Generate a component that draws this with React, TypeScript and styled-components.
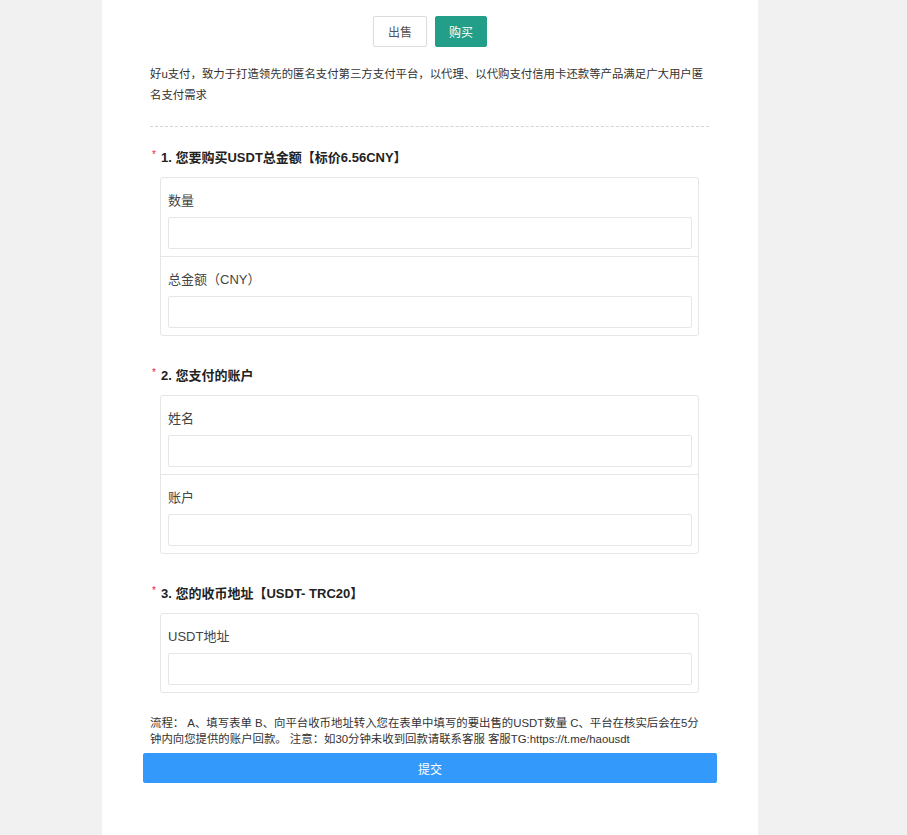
import React from "react";
import styled, { createGlobalStyle } from "styled-components";

const Global = createGlobalStyle`
  html, body { margin: 0; padding: 0; background: #f1f1f1; }
  body { font-family: "Liberation Sans", "Noto Sans CJK SC", sans-serif; color: #333; }
  * { box-sizing: border-box; }
`;

const Panel = styled.div`
  margin-left: 102px;
  width: 656px;
  min-height: 835px;
  background: #fff;
  padding-top: 16px;
  display: flex;
  flex-direction: column;
`;

const ButtonRow = styled.div`
  display: flex;
  justify-content: center;
  gap: 8px;
`;

const TabButton = styled.button<{ $active?: boolean }>`
  height: 31px;
  width: ${(p) => (p.$active ? "52px" : "54px")};
  border-radius: 2px;
  font-family: inherit;
  font-size: 12px;
  padding: 0;
  cursor: pointer;
  border: 1px solid ${(p) => (p.$active ? "#229e88" : "#dcdcdc")};
  background: ${(p) => (p.$active ? "#239f89" : "#fff")};
  color: ${(p) => (p.$active ? "#fff" : "#555")};
`;

const Content = styled.div`
  padding: 0 49px 0 48px;
  display: flex;
  flex-direction: column;
`;

const Intro = styled.p`
  margin: 17px 0 0;
  font-size: 11.4px;
  line-height: 21px;
  color: #333;
`;

const Divider = styled.hr`
  margin: 20px 0 0;
  border: none;
  border-top: 1px dashed #d6d6d6;
  height: 0;
`;

const Heading = styled.h3<{ $first?: boolean }>`
  margin: ${(p) => (p.$first ? "21px" : "30px")} 0 0;
  font-size: 13px;
  line-height: 20px;
  font-weight: bold;
  color: #222;
  display: flex;
  align-items: center;
`;

const Star = styled.span`
  color: #e23;
  font-size: 10px;
  font-weight: normal;
  width: 11px;
  padding-left: 2px;
  align-self: flex-start;
  line-height: 14px;
`;

const Card = styled.div`
  margin: 9px 0 0 10px;
  width: 539px;
  border: 1px solid #e6e6e6;
  border-radius: 3px;
  display: flex;
  flex-direction: column;
`;

const Field = styled.div`
  padding: 13px 6px 7px 7px;
  display: flex;
  flex-direction: column;
  & + & {
    border-top: 1px solid #e6e6e6;
  }
`;

const Label = styled.label`
  font-size: 13px;
  line-height: 20px;
  color: #444;
  margin-bottom: 6px;
`;

const Input = styled.input`
  height: 32px;
  width: 100%;
  border: 1px solid #e6e6e6;
  border-radius: 2px;
  background: #fff;
  outline: none;
  padding: 0 8px;
  font-family: inherit;
`;

const Flow = styled.p`
  margin: 22px 0 0;
  font-size: 11.4px;
  line-height: 16px;
  color: #333;
`;

const Submit = styled.button`
  margin: 6px 41px 0;
  height: 30px;
  border: none;
  border-radius: 2px;
  background: #3399fb;
  color: #fff;
  font-family: inherit;
  font-size: 12px;
  cursor: pointer;
`;

type Section = { title: string; fields: string[] };

const sections: Section[] = [
  { title: "1. 您要购买USDT总金额【标价6.56CNY】", fields: ["数量", "总金额（CNY）"] },
  { title: "2. 您支付的账户", fields: ["姓名", "账户"] },
  { title: "3. 您的收币地址【USDT- TRC20】", fields: ["USDT地址"] },
];

export default function App() {
  return (
    <>
      <Global />
      <Panel>
        <ButtonRow>
          <TabButton>出售</TabButton>
          <TabButton $active>购买</TabButton>
        </ButtonRow>
        <Content>
          <Intro>
            好u支付，致力于打造领先的匿名支付第三方支付平台，以代理、以代购支付信用卡还款等产品满足广大用户匿名支付需求
          </Intro>
          <Divider />
          {sections.map((s, i) => (
            <React.Fragment key={s.title}>
              <Heading $first={i === 0}>
                <Star>*</Star>
                {s.title}
              </Heading>
              <Card>
                {s.fields.map((f) => (
                  <Field key={f}>
                    <Label>{f}</Label>
                    <Input />
                  </Field>
                ))}
              </Card>
            </React.Fragment>
          ))}
          <Flow>
            流程： A、填写表单 B、向平台收币地址转入您在表单中填写的要出售的USDT数量 C、平台在核实后会在5分钟内向您提供的账户回款。 注意：如30分钟未收到回款请联系客服 客服TG:https://t.me/haousdt
          </Flow>
        </Content>
        <Submit>提交</Submit>
      </Panel>
    </>
  );
}
